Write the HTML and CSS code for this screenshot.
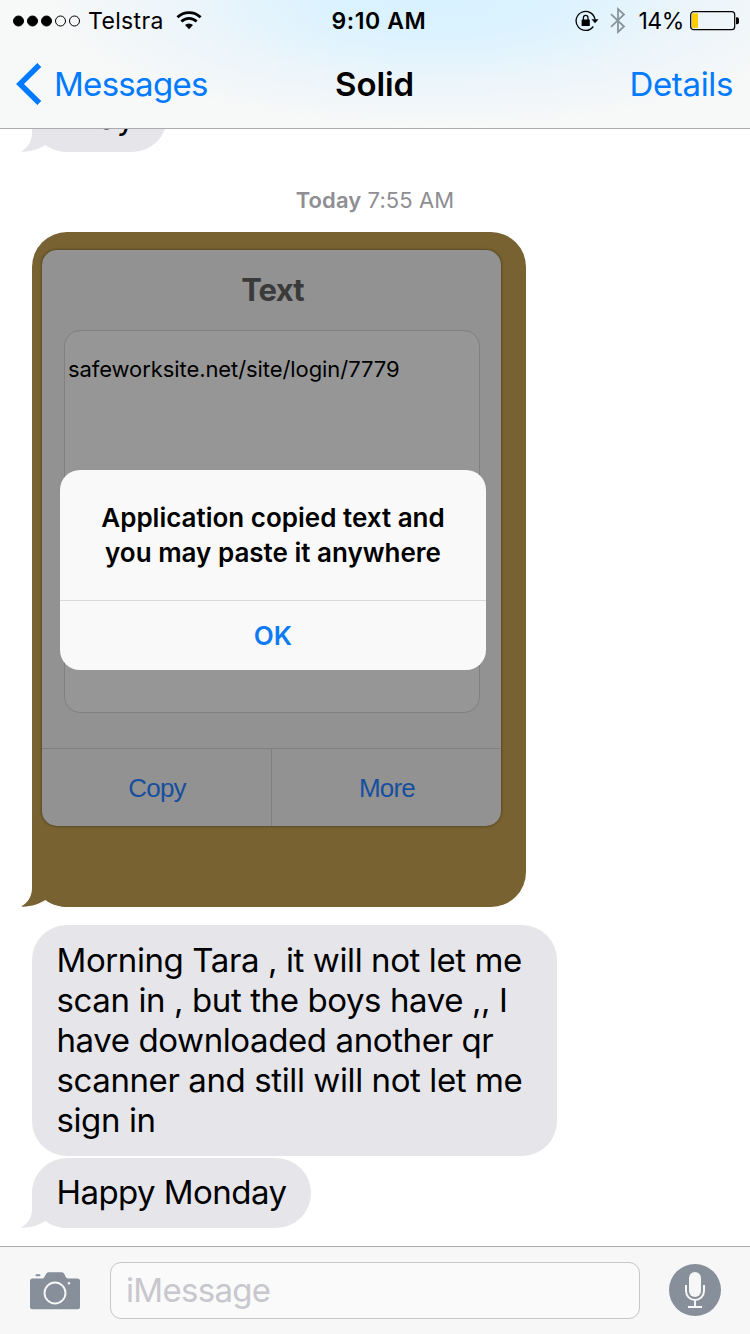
FILE: index.html
```html
<!DOCTYPE html>
<html lang="en">
<head>
<meta charset="utf-8">
<title>Messages</title>
<link rel="stylesheet" href="styles.css">
</head>
<body>
<div class="screen">
  <header class="header">
    <div class="status">
      <div class="status-left">
        <svg class="signal" width="67" height="12" viewBox="0 0 67 12"><g stroke="#000" stroke-width="1"><circle cx="5.5" cy="6" r="5"/><circle cx="19.5" cy="6" r="5"/><circle cx="33.5" cy="6" r="5"/><circle cx="47.5" cy="6" r="5" fill="none"/><circle cx="61.5" cy="6" r="5" fill="none"/></g></svg>
        <span class="carrier">Telstra</span>
        <svg class="wifi" width="26" height="19" viewBox="0 0 26 19"><g fill="none" stroke="#000" stroke-width="2.8"><path d="M1.400 6.300a16.500 16.500 0 0 1 23.200 0"/><path d="M5.400 10.500a10.800 10.800 0 0 1 15.200 0"/></g><path d="M9 14a5.800 5.800 0 0 1 8 0L13 18.200z"/></svg>
      </div>
      <span class="time">9:10 AM</span>
      <div class="status-right">
        <svg class="lock" width="24" height="22" viewBox="0 0 24 22"><path d="M18.300 16.500A9.500 9.500 0 1 1 20 9.500" fill="none" stroke="#000" stroke-width="1.300"/><path d="M16.500 9.300h7L20 13.300z"/><rect x="6.600" y="9.400" width="8.200" height="6.600" rx=".6"/><path d="M8.400 10V7.700a2.300 2.300 0 0 1 4.600 0V10" fill="none" stroke="#000" stroke-width="1.300"/></svg>
        <svg class="bluetooth" width="16" height="27" viewBox="0 0 16 27"><path d="M1 7.200l13 12.300L8 25V2l6 5.500L1 19.800" fill="none" stroke="#89959c" stroke-width="1.800"/></svg>
        <span class="percent">14%</span>
        <svg class="battery" width="49" height="20" viewBox="0 0 49 20"><rect x=".7" y=".7" width="44" height="18" rx="3" fill="none" stroke="#000" stroke-width="1.200"/><rect x="2" y="2.300" width="6" height="14.700" rx="1" fill="#fc0"/><path d="M46 6.300h1a2 2 0 0 1 2 2v3a2 2 0 0 1-2 2h-1z"/></svg>
      </div>
    </div>
    <nav class="nav">
      <a class="back"><svg width="26" height="42" viewBox="0 0 26 42"><path d="M23.300 2L4 21l19.300 19" fill="none" stroke="#007aff" stroke-width="5.500"/></svg><span class="back-label">Messages</span></a>
      <h1 class="title">Solid</h1>
      <a class="details">Details</a>
    </nav>
  </header>

  <main class="chat">
    <div class="bubble tailed okay">Okay<svg class="tail" width="50" height="40" viewBox="0 0 50 40"><path d="M11 0V21C11 29 7 36 0 39.600C10 40 18 37 24.500 33C32 38.500 40 40 50 40V0z"/></svg></div>
    <p class="stamp"><b>Today</b> 7:55 AM</p>
    <div class="photo tailed">
      <div class="card">
        <h2 class="card-title">Text</h2>
        <div class="field">safeworksite.net/site/login/7779</div>
        <div class="actions"><span class="copy">Copy</span><span class="more">More</span></div>
        <div class="alert">
          <p class="alert-text">Application copied text and<br>you may paste it anywhere</p>
          <div class="alert-ok">OK</div>
        </div>
      </div>
      <svg class="tail" width="50" height="40" viewBox="0 0 50 40"><path d="M11 0V21C11 29 7 36 0 39.600C10 40 18 37 24.500 33C32 38.500 40 40 50 40V0z"/></svg>
    </div>
    <div class="bubble long">Morning Tara , it will not let me<br>scan in , but the boys have ,, I<br>have downloaded another qr<br>scanner and still will not let me<br>sign in</div>
    <div class="bubble tailed happy">Happy Monday<svg class="tail" width="50" height="40" viewBox="0 0 50 40"><path d="M11 0V21C11 29 7 36 0 39.600C10 40 18 37 24.500 33C32 38.500 40 40 50 40V0z"/></svg></div>
  </main>

  <footer class="composer">
    <svg class="camera" width="50" height="38" viewBox="0 0 50 38"><path d="M2.500 6.500H12c2.500 0 2.500-2.300 3.700-4C16.600.7 17.500.2 19 .2h12c1.600 0 2.700.5 3.500 2 1.200 2.300 1.500 4.300 4 4.300h9a2.500 2.500 0 0 1 2.500 2.500v25.700a2.500 2.500 0 0 1-2.500 2.500h-45A2.500 2.500 0 0 1 0 34.700V9a2.500 2.500 0 0 1 2.500-2.500z"/><rect x="5.500" y="2.200" width="5" height="2" rx="1"/><circle cx="25" cy="21" r="10.500" fill="none" stroke="#f7f7f7" stroke-width="1.900"/><circle cx="39" cy="11.200" r="1.200" fill="#f7f7f7"/></svg>
    <div class="input">iMessage</div>
    <svg class="mic" width="52" height="52" viewBox="0 0 52 52"><circle cx="26" cy="26" r="26" fill="#878f9b"/><g fill="none" stroke="#f7f7f7" stroke-width="2"><path d="M17 21v6a9 9 0 0 0 18 0V21M26 36v7M19 43h14"/></g><rect x="20" y="8" width="12" height="25" rx="6" fill="#f7f7f7"/></svg>
  </footer>
</div>
</body>
</html>
```
FILE: styles.css
```css
* { box-sizing: border-box; }
body { margin: 0; background: #fff; color: #000; font-family: Inter, "Liberation Sans", sans-serif; }
h1, h2, p { margin: 0; }
.screen { width: 750px; height: 1334px; display: flex; flex-direction: column; overflow: hidden; }

.header {
  height: 129px; flex: none; border-bottom: 1px solid #acacae;
  background: radial-gradient(ellipse 390px 125px at 440px 0, #d8f1ff 0%, #dcf3ff 30%, rgba(232, 244, 251, .85) 62%, rgba(247, 247, 247, 0) 100%), #f7f8f8;
}
.status { height: 40px; display: grid; grid-template-columns: 1fr auto 1fr; align-items: center; padding: 1px 11px 0 13px; font-size: 23px; line-height: 37px; }
.status-left, .status-right { display: flex; align-items: center; }
.status-right { justify-content: flex-end; }
.carrier { margin: 0 12px 0 8px; padding-top: 2px; letter-spacing: .35px; }
.time { font-weight: 600; letter-spacing: .6px; margin: 0 -3px 0 3px; padding-top: 2px; }
.lock { margin-right: 11px; }
.bluetooth { margin-right: 12px; }
.percent { letter-spacing: -.4px; padding-top: 2px; }
.battery { margin-left: 6px; }
.nav { height: 88px; display: grid; grid-template-columns: 1fr auto 1fr; align-items: center; padding: 0 17px 0 16px; font-size: 33px; line-height: 40px; color: #007aff; }
.back { display: flex; align-items: center; gap: 12px; letter-spacing: -.7px; }
.title { font-size: 33px; font-weight: 600; letter-spacing: -.1px; color: #000; }
.details { justify-self: end; letter-spacing: -.35px; }

.chat { flex: 1; min-height: 0; display: flex; flex-direction: column; justify-content: flex-end; align-items: flex-start; padding: 0 32px 18px; overflow: hidden; }
.bubble { flex: none; height: 70px; background: #e5e5ea; border-radius: 35px; padding: 14px 0 0 24.5px; font-size: 33px; line-height: 40px; letter-spacing: -.4px; white-space: nowrap; }
.tailed { position: relative; }
.tail { position: absolute; left: -11px; bottom: 0; fill: #e5e5ea; z-index: -1; }
.bubble.okay { width: 135px; padding-top: 15px; }
.stamp { align-self: center; margin: 33px 0 17px; font-size: 22px; line-height: 30px; letter-spacing: .1px; color: #8e8e93; }
.stamp b { font-weight: 600; }
.bubble.long { width: 525px; height: 231px; margin: 18px 0 2px; padding-top: 15px; }
.happy { width: 279px; letter-spacing: -.55px; }

.photo { flex: none; width: 494px; height: 675px; padding: 18px 0 0 10px; border-radius: 35px; background: #786231; z-index: 0; }
.photo .tail { fill: #786231; }
.card { position: relative; width: 459px; height: 576px; display: flex; flex-direction: column; border-radius: 15px; background: #929292; box-shadow: 0 0 3px rgba(0, 0, 0, .5); }
.card-title { height: 80px; padding-left: 2px; font-size: 31px; line-height: 80px; font-weight: 700; letter-spacing: -.8px; text-align: center; color: #3a3a3a; }
.field { height: 383px; margin: 0 21px 0 22px; padding: 23px 3px; border: 1px solid #808080; border-radius: 16px; background: #969696; font-size: 22px; line-height: 30px; letter-spacing: -.08px; white-space: nowrap; }
.actions { margin-top: auto; height: 78px; display: grid; grid-template-columns: 230px 1fr; border-top: 1px solid #808080; font-family: "Liberation Sans", sans-serif; font-size: 26px; line-height: 78px; letter-spacing: -.8px; text-align: center; color: #174f9f; }
.actions span { height: 77px; padding-left: 1px; }
.copy { border-right: 1px solid #808080; }
.alert { position: absolute; left: 18px; top: 220px; width: 426px; height: 200px; border-radius: 20px; background: #f9f9fa; text-align: center; }
.alert-text { height: 131px; padding-top: 30px; border-bottom: 1px solid #d9d9dc; font-size: 26px; line-height: 35px; font-weight: 600; white-space: nowrap; }
.alert-ok { font-size: 26px; line-height: 69px; font-weight: 600; color: #0f7bf2; }

.composer { flex: none; height: 88px; display: flex; align-items: center; border-top: 1px solid #acacae; padding: 0 29px 0 30px; background: #f7f7f7; }
.camera { fill: #878f9b; }
.mic { margin-bottom: 2px; }
.input { flex: 1; height: 57px; margin: 0 29px 0 30px; padding: 0 15px; border: 1px solid #c7c7cb; border-radius: 11px; background: #fafafa; font-size: 33px; line-height: 55px; letter-spacing: -.7px; color: #c7c7cd; }
```
